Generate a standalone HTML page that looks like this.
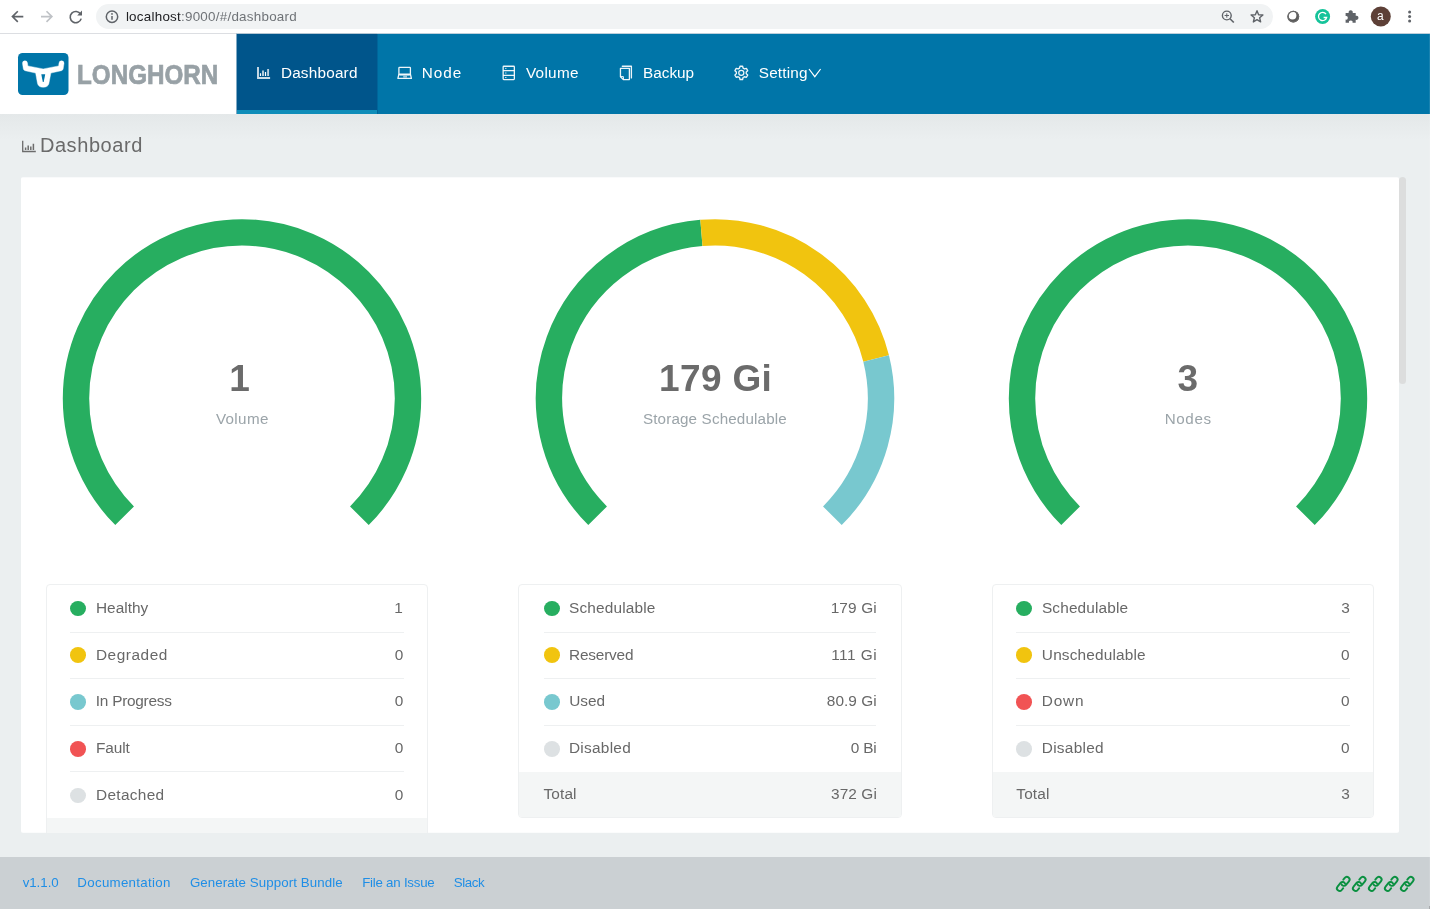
<!DOCTYPE html>
<html lang="en">
<head>
<meta charset="utf-8">
<title>Longhorn</title>
<style>
*{box-sizing:border-box;margin:0;padding:0}
html,body{width:1430px;height:909px;overflow:hidden;background:#ebeff0}
body{position:relative;will-change:transform;font-family:"Liberation Sans",sans-serif;color:#666}
.t b{font-weight:400;color:#202124}
.t{position:absolute;display:block;white-space:nowrap;font-style:normal;font-weight:400;text-decoration:none}
svg{position:absolute;display:block;overflow:visible}
#chrome{position:absolute;left:0;top:0;width:1430px;height:34px;background:#fff}
#chrome:after{content:"";position:absolute;left:0;top:33px;width:1430px;height:1px;background:linear-gradient(90deg,#dcdee2 236.5px,#b4c6d3 236.5px,#b4c6d3 377px,#bccfdb 377px)}
#omni{position:absolute;left:95.8px;top:3.7px;width:1177.2px;height:25.8px;border-radius:13px;background:#f1f3f4}
#header{position:absolute;left:0;top:33.7px;width:1430px;height:80.3px;background:#0075a8}
#logo{position:absolute;left:0;top:0;width:236.5px;height:80.3px;background:#fff}
#tab{position:absolute;left:237px;top:0;width:140px;height:80.3px;background:#00558b;box-shadow:-1px 0 0 #80aac5,1px 0 0 #00659a}
#tab:after{content:"";position:absolute;left:0;bottom:0;width:100%;height:4px;background:#0f8db9}
#shade{position:absolute;left:0;top:114px;width:1430px;height:26px;background:linear-gradient(#e4e8e9,#ebeff0)}
#card{position:absolute;left:21px;top:177px;width:1378px;height:656px;background:linear-gradient(#f9fafb 1px,#fff 1px,#fff 655px,#fbfcfc 655px);border-radius:2px}
#clip{position:absolute;left:0;top:0;width:1399px;height:832.8px;overflow:hidden}
#sb{position:absolute;left:1399px;top:177.3px;width:7px;height:207px;border-radius:3.5px;background:#dcdddd}
.tb{position:absolute;border:1px solid #eef0f1;border-radius:4px;background:#fff;overflow:hidden}
.tot{position:absolute;left:0;width:100%;background:#f4f6f6}
.sep{position:absolute;height:1px;background:#eef0f1}
.dot{position:absolute;width:16.4px;height:15.8px;border-radius:50%}
#footer{position:absolute;left:0;top:857px;width:1430px;height:52px;background:#cbd0d3}
#edge{position:absolute;left:1429px;top:34px;width:1px;height:875px;background:rgba(255,255,255,.1)}
#edge:after{content:"";position:absolute;left:0;bottom:0;width:1px;height:3px;background:#a9abad}
</style>
</head>
<body>
<div id="shade"></div>
<div id="chrome">
<div id="omni"></div>
<svg style="left:0;top:0" width="1430" height="34" viewBox="0 0 1430 34" fill="none">
<path d="M23.300 16.600H12.700M17.800 11.300L12.400 16.600L17.800 21.900" stroke="#5f6368" stroke-width="1.600"/>
<path d="M41 16.600H51.700M46.500 11.300L51.900 16.600L46.500 21.900" stroke="#bfc2c6" stroke-width="1.600"/>
<path d="M80.600 14.200A5.600 5.600 0 1 0 81.200 18.600" stroke="#5f6368" stroke-width="1.600"/>
<path d="M82 10.600V15.400H77.200Z" fill="#5f6368"/>
<circle cx="112" cy="16.700" r="5.700" stroke="#5f6368" stroke-width="1.500"/>
<path d="M112 16V19.800" stroke="#5f6368" stroke-width="1.500"/>
<circle cx="112" cy="13.900" r=".9" fill="#5f6368"/>
<circle cx="1226.800" cy="15.500" r="4.400" stroke="#5f6368" stroke-width="1.400"/>
<path d="M1230 18.700L1233.800 22.500" stroke="#5f6368" stroke-width="1.600"/>
<path d="M1224.600 15.500H1229M1226.800 13.300V17.700" stroke="#5f6368" stroke-width="1"/>
<path d="M1257.00 10.70L1258.62 14.68L1262.90 14.98L1259.62 17.75L1260.64 21.92L1257.00 19.65L1253.36 21.92L1254.38 17.75L1251.10 14.98L1255.38 14.68Z" stroke="#5f6368" stroke-width="1.400" stroke-linejoin="round"/>
<circle cx="1293.300" cy="16.600" r="5.900" fill="#5a5a5a"/>
<circle cx="1292.500" cy="15.500" r="3.900" fill="#fff"/>
<circle cx="1293.300" cy="16.600" r="5.300" fill="none" stroke="#6a6a6a" stroke-width="1.300"/>
<circle cx="1322.600" cy="16.500" r="7.500" fill="#15c39a"/>
<path d="M1326 14.200A4.100 4.100 0 1 0 1326.600 17.500H1323.600" stroke="#fff" stroke-width="1.300"/>
<path d="M1345.600 12.900H1348.700A2.100 2.100 0 1 1 1352.700 12.900H1355.700V15.800A2.100 2.100 0 1 1 1355.700 19.800V22.800H1352.500A1.800 1.800 0 1 0 1349 22.800H1345.600V19.600A1.800 1.800 0 1 0 1345.600 16.100Z" fill="#5f6368"/>
<circle cx="1380.800" cy="16.500" r="10" fill="#5d4037"/>
<circle cx="1409.600" cy="12.100" r="1.500" fill="#5f6368"/>
<circle cx="1409.600" cy="16.600" r="1.500" fill="#5f6368"/>
<circle cx="1409.600" cy="21.100" r="1.500" fill="#5f6368"/>
</svg>
<span class="t" style="left:125.9px;top:8px;font-size:13.4px;line-height:18px;color:#6f7377;letter-spacing:0.25px"><b>localhost</b>:9000/#/dashboard</span>
<span class="t" style="left:1377.1px;top:8px;font-size:12px;line-height:16px;color:#ffffff">a</span>
</div>
<header id="header">
<div id="logo"></div>
<div id="tab"></div>
</header>
<svg style="left:17.800px;top:52.900px" width="50.500" height="42" viewBox="0 0 50.500 42">
<rect x="0" y="0" width="50.500" height="42" rx="4.600" fill="#0075a8"/>
<path d="M4.500 10.600A2.500 2.500 0 0 1 9.500 10.100L9.900 12.900L25.200 15.900L40.600 12.900L41 10.100A2.500 2.500 0 0 1 46 10.600L45.200 15.800Q44.900 17.300 43.400 17.700L32.900 20.100L30.900 30.600Q30.100 34.300 25.200 34.300Q20.300 34.300 19.500 30.600L17.600 20.100L7.100 17.700Q5.600 17.300 5.300 15.800Z" fill="#fff" stroke="#fff" stroke-width=".4" stroke-linejoin="round"/>
<path d="M23.300 21.300H27.200L25.700 29H24.800Z" fill="#0075a8"/>
</svg>
<div class="t" style="left:77.29px;top:57px;font-size:27.6px;line-height:36px;color:#98a1a6;font-weight:700;transform-origin:0 50%;transform:scaleX(.878);-webkit-text-stroke:.7px #98a1a6">LONGHORN</div>
<svg style="left:0;top:0" width="1430" height="114" viewBox="0 0 1430 114" fill="none" stroke="#fff" stroke-width="1.3" stroke-opacity=".93">
<g id="ic-dash"><path d="M258 67V78H270.100" stroke-width="1.900" stroke-opacity=".8"/><path d="M260.500 73.200V76.100M265.500 72.100V76.100" stroke-width="1.200" stroke-opacity="1"/><path d="M263 70.600V76.100M268.100 68.900V76.100" stroke-width="1.900" stroke-opacity=".72"/></g>
<g id="ic-node"><rect x="398.900" y="67.350" width="11.500" height="6.900" rx=".6"/><path d="M398.900 74.200L397.900 78.400H411.400L410.400 74.200" stroke-linejoin="round"/><path d="M399.400 75.200H409.900" stroke-width="1.400" stroke-opacity=".6"/><path d="M403.200 76.700H407" stroke-width="1.800" stroke-opacity=".6"/></g>
<g id="ic-vol"><rect x="503.150" y="66.250" width="11.200" height="13.300" rx=".7"/><path d="M503.100 70.650H514.400M503.100 75.350H514.400" stroke-width="1.200"/><path d="M505.200 68.400H506.400M505.200 73H506.400M505.200 77.500H506.400" stroke-width="1"/></g>
<g id="ic-bak"><path d="M622.300 66.250H631.400V77.900" stroke-linecap="round" stroke-linejoin="round"/><path d="M620.450 68.350H629.400V79.550H623.300L620.450 76.700Z" stroke-linejoin="round"/><path d="M620.700 76.600H623.400V79.300" stroke-width="1"/></g>
<g id="ic-set" stroke-linejoin="round"><circle cx="741.3" cy="72.85" r="2.550" stroke-width="1.250"/><path d="M739.51 68.18L740.01 66.22L742.59 66.22L743.09 68.18L744.45 68.96L746.39 68.42L747.68 70.65L746.24 72.07L746.24 73.63L747.68 75.05L746.39 77.28L744.45 76.74L743.09 77.52L742.59 79.48L740.01 79.48L739.51 77.52L738.15 76.74L736.21 77.28L734.92 75.05L736.36 73.63L736.36 72.07L734.92 70.65L736.21 68.42L738.15 68.96Z" stroke-width="1.350"/></g>
<path d="M809 69L814.800 76.700L820.600 69" stroke-width="1.200" stroke-opacity="1"/>
</svg>
<nav>
<a class="t" style="left:280.9px;top:63px;font-size:15.3px;line-height:20px;color:#ffffff;letter-spacing:0.21px">Dashboard</a>
<a class="t" style="left:421.83px;top:63px;font-size:15.3px;line-height:20px;color:#ffffff;letter-spacing:0.93px">Node</a>
<a class="t" style="left:525.99px;top:63px;font-size:15.3px;line-height:20px;color:#ffffff;letter-spacing:0.28px">Volume</a>
<a class="t" style="left:642.97px;top:63px;font-size:15.3px;line-height:20px;color:#ffffff;letter-spacing:0.02px">Backup</a>
<a class="t" style="left:758.79px;top:63px;font-size:15.3px;line-height:20px;color:#ffffff;letter-spacing:0.17px">Setting</a>
</nav>
<svg style="left:22px;top:140px" width="14" height="13" viewBox="0 0 14 13" fill="none" stroke="#6c6c6c" stroke-width="1.300"><path d="M.7 .8V11.500H13.800"/><path d="M3.600 7.600V10M6.200 5.400V10M8.800 6.600V10M11.400 3.800V10" stroke-width="1.500"/></svg>
<h1 class="t" style="left:39.91px;top:131.7px;font-size:20px;line-height:26px;color:#6a6a6a;letter-spacing:0.57px">Dashboard</h1>
<main id="card"></main>
<div id="clip">
<svg style="left:0;top:0" width="1430" height="909" viewBox="0 0 1430 909" fill="none" stroke-width="26.4">
<path stroke="#27ae60" d="M124.62 515.78A166 166 0 1 1 359.38 515.78"/>
<path stroke="#27ae60" d="M597.62 515.78A166 166 0 0 1 701.41 232.96"/>
<path stroke="#f1c40f" d="M701.41 232.96A166 166 0 0 1 876.14 358.54"/>
<path stroke="#78c8cf" d="M876.14 358.54A166 166 0 0 1 832.38 515.78"/>
<path stroke="#27ae60" d="M1070.62 515.78A166 166 0 1 1 1305.38 515.78"/>
</svg>
<div class="t" style="left:229.2px;top:354.3px;font-size:37px;line-height:49px;color:#6b6b6b;font-weight:700">1</div>
<div class="t" style="left:215.93px;top:408.6px;font-size:15.2px;line-height:20px;color:#9ba4a9;letter-spacing:0.35px">Volume</div>
<div class="t" style="left:659.08px;top:354.3px;font-size:37px;line-height:49px;color:#6b6b6b;font-weight:700;letter-spacing:0.34px">179 Gi</div>
<div class="t" style="left:642.92px;top:408.6px;font-size:15.2px;line-height:20px;color:#9ba4a9;letter-spacing:0.16px">Storage Schedulable</div>
<div class="t" style="left:1177.6px;top:354.3px;font-size:37px;line-height:49px;color:#6b6b6b;font-weight:700">3</div>
<div class="t" style="left:1164.82px;top:408.6px;font-size:15.2px;line-height:20px;color:#9ba4a9;letter-spacing:0.57px">Nodes</div>
<section class="tb" style="left:45.8px;top:584.3px;width:382.4px;height:279.7px">
<div class="tot" style="top:232.5px;height:46.2px"></div></section>
<div class="sep" style="left:70px;top:631.5px;width:333.7px"></div>
<div class="sep" style="left:70px;top:677.8px;width:333.7px"></div>
<div class="sep" style="left:70px;top:725.1px;width:333.7px"></div>
<div class="sep" style="left:70px;top:771.4px;width:333.7px"></div>
<i class="dot" style="left:70px;top:600.6px;background:#27ae60"></i>
<i class="dot" style="left:70px;top:647.4px;background:#f1c40f"></i>
<i class="dot" style="left:70px;top:694px;background:#78c8cf"></i>
<i class="dot" style="left:70px;top:740.9px;background:#f15354"></i>
<i class="dot" style="left:70px;top:787.5px;background:#dde1e3"></i>
<span class="t" style="left:95.98px;top:596.8px;font-size:15.4px;line-height:21px;color:#686868;letter-spacing:0.02px">Healthy</span>
<em class="t" style="left:394.26px;top:596.8px;font-size:15.4px;line-height:21px;color:#686868">1</em>
<span class="t" style="left:95.98px;top:643.7px;font-size:15.4px;line-height:21px;color:#686868;letter-spacing:0.54px">Degraded</span>
<em class="t" style="left:394.84px;top:643.7px;font-size:15.4px;line-height:21px;color:#686868">0</em>
<span class="t" style="left:95.8px;top:690.2px;font-size:15.4px;line-height:21px;color:#686868;letter-spacing:-0.26px">In Progress</span>
<em class="t" style="left:394.84px;top:690.2px;font-size:15.4px;line-height:21px;color:#686868">0</em>
<span class="t" style="left:95.98px;top:737.3px;font-size:15.4px;line-height:21px;color:#686868;letter-spacing:-0.12px">Fault</span>
<em class="t" style="left:394.84px;top:737.3px;font-size:15.4px;line-height:21px;color:#686868">0</em>
<span class="t" style="left:95.98px;top:783.8px;font-size:15.4px;line-height:21px;color:#686868;letter-spacing:0.32px">Detached</span>
<em class="t" style="left:394.84px;top:783.8px;font-size:15.4px;line-height:21px;color:#686868">0</em>
<span class="t" style="left:70.8px;top:830px;font-size:15.4px;line-height:21px;color:#686868;letter-spacing:-0.07px">Total</span>
<em class="t" style="left:394.8px;top:830px;font-size:15.4px;line-height:21px;color:#686868">1</em>
<section class="tb" style="left:518.3px;top:584.3px;width:383.7px;height:233.7px">
<div class="tot" style="top:186.6px;height:46.1px"></div></section>
<div class="sep" style="left:543.6px;top:631.5px;width:332.4px"></div>
<div class="sep" style="left:543.6px;top:677.8px;width:332.4px"></div>
<div class="sep" style="left:543.6px;top:725.1px;width:332.4px"></div>
<i class="dot" style="left:543.6px;top:600.6px;background:#27ae60"></i>
<i class="dot" style="left:543.6px;top:647.4px;background:#f1c40f"></i>
<i class="dot" style="left:543.6px;top:694px;background:#78c8cf"></i>
<i class="dot" style="left:543.6px;top:740.9px;background:#dde1e3"></i>
<span class="t" style="left:569.02px;top:596.8px;font-size:15.4px;line-height:21px;color:#686868;letter-spacing:0.16px">Schedulable</span>
<em class="t" style="left:830.65px;top:596.8px;font-size:15.4px;line-height:21px;color:#686868;letter-spacing:0.16px">179 Gi</em>
<span class="t" style="left:568.98px;top:643.7px;font-size:15.4px;line-height:21px;color:#686868;letter-spacing:-0.19px">Reserved</span>
<em class="t" style="left:831.14px;top:643.7px;font-size:15.4px;line-height:21px;color:#686868;letter-spacing:0.52px">111 Gi</em>
<span class="t" style="left:569.14px;top:690.2px;font-size:15.4px;line-height:21px;color:#686868;letter-spacing:0.03px">Used</span>
<em class="t" style="left:826.84px;top:690.2px;font-size:15.4px;line-height:21px;color:#686868;letter-spacing:0.05px">80.9 Gi</em>
<span class="t" style="left:568.98px;top:737.3px;font-size:15.4px;line-height:21px;color:#686868;letter-spacing:0.27px">Disabled</span>
<em class="t" style="left:850.64px;top:737.3px;font-size:15.4px;line-height:21px;color:#686868;letter-spacing:-0.12px">0 Bi</em>
<span class="t" style="left:543.47px;top:782.9px;font-size:15.4px;line-height:21px;color:#686868;letter-spacing:0.14px">Total</span>
<em class="t" style="left:831px;top:782.9px;font-size:15.4px;line-height:21px;color:#686868;letter-spacing:0.09px">372 Gi</em>
<section class="tb" style="left:991.8px;top:584.3px;width:382.2px;height:233.7px">
<div class="tot" style="top:186.6px;height:46.1px"></div></section>
<div class="sep" style="left:1016px;top:631.5px;width:333.6px"></div>
<div class="sep" style="left:1016px;top:677.8px;width:333.6px"></div>
<div class="sep" style="left:1016px;top:725.1px;width:333.6px"></div>
<i class="dot" style="left:1016px;top:600.6px;background:#27ae60"></i>
<i class="dot" style="left:1016px;top:647.4px;background:#f1c40f"></i>
<i class="dot" style="left:1016px;top:694px;background:#f15354"></i>
<i class="dot" style="left:1016px;top:740.9px;background:#dde1e3"></i>
<span class="t" style="left:1041.91px;top:596.8px;font-size:15.4px;line-height:21px;color:#686868;letter-spacing:0.15px">Schedulable</span>
<em class="t" style="left:1341.14px;top:596.8px;font-size:15.4px;line-height:21px;color:#686868">3</em>
<span class="t" style="left:1041.86px;top:643.7px;font-size:15.4px;line-height:21px;color:#686868;letter-spacing:0.16px">Unschedulable</span>
<em class="t" style="left:1341.02px;top:643.7px;font-size:15.4px;line-height:21px;color:#686868">0</em>
<span class="t" style="left:1041.78px;top:690.2px;font-size:15.4px;line-height:21px;color:#686868;letter-spacing:0.8px">Down</span>
<em class="t" style="left:1341.02px;top:690.2px;font-size:15.4px;line-height:21px;color:#686868">0</em>
<span class="t" style="left:1041.78px;top:737.3px;font-size:15.4px;line-height:21px;color:#686868;letter-spacing:0.28px">Disabled</span>
<em class="t" style="left:1341.02px;top:737.3px;font-size:15.4px;line-height:21px;color:#686868">0</em>
<span class="t" style="left:1016.33px;top:782.9px;font-size:15.4px;line-height:21px;color:#686868;letter-spacing:0.14px">Total</span>
<em class="t" style="left:1341.15px;top:782.9px;font-size:15.4px;line-height:21px;color:#686868">3</em>
</div>
<div id="sb"></div>
<footer id="footer"></footer>
<div id="edge"></div>
<a class="t" style="left:22.63px;top:874.4px;font-size:13.3px;line-height:18px;color:#1f8ee6;letter-spacing:-0.03px">v1.1.0</a>
<a class="t" style="left:77.36px;top:874.4px;font-size:13.3px;line-height:18px;color:#1f8ee6;letter-spacing:0.29px">Documentation</a>
<a class="t" style="left:189.9px;top:874.4px;font-size:13.3px;line-height:18px;color:#1f8ee6;letter-spacing:0.09px">Generate Support Bundle</a>
<a class="t" style="left:362.21px;top:874.4px;font-size:13.3px;line-height:18px;color:#1f8ee6;letter-spacing:-0.24px">File an Issue</a>
<a class="t" style="left:453.66px;top:874.4px;font-size:13.3px;line-height:18px;color:#1f8ee6;letter-spacing:-0.37px">Slack</a>
<svg style="left:1335.700px;top:876.100px" width="82" height="20" viewBox="0 0 82 20" fill="none" stroke="#0a9040" stroke-width="1.900" stroke-linecap="round" stroke-linejoin="round"><g transform="translate(0 0)"><path d="M7.30 3.70L8.77 1.92A2.7 2.7 0 0 1 12.93 5.38L9.98 8.93A2.7 2.7 0 0 1 5.37 8.14"/><path d="M7.20 12.20L5.73 13.98A2.7 2.7 0 0 1 1.57 10.52L4.52 6.97A2.7 2.7 0 0 1 9.13 7.76"/></g><g transform="translate(16 0)"><path d="M7.30 3.70L8.77 1.92A2.7 2.7 0 0 1 12.93 5.38L9.98 8.93A2.7 2.7 0 0 1 5.37 8.14"/><path d="M7.20 12.20L5.73 13.98A2.7 2.7 0 0 1 1.57 10.52L4.52 6.97A2.7 2.7 0 0 1 9.13 7.76"/></g><g transform="translate(32 0)"><path d="M7.30 3.70L8.77 1.92A2.7 2.7 0 0 1 12.93 5.38L9.98 8.93A2.7 2.7 0 0 1 5.37 8.14"/><path d="M7.20 12.20L5.73 13.98A2.7 2.7 0 0 1 1.57 10.52L4.52 6.97A2.7 2.7 0 0 1 9.13 7.76"/></g><g transform="translate(48 0)"><path d="M7.30 3.70L8.77 1.92A2.7 2.7 0 0 1 12.93 5.38L9.98 8.93A2.7 2.7 0 0 1 5.37 8.14"/><path d="M7.20 12.20L5.73 13.98A2.7 2.7 0 0 1 1.57 10.52L4.52 6.97A2.7 2.7 0 0 1 9.13 7.76"/></g><g transform="translate(64 0)"><path d="M7.30 3.70L8.77 1.92A2.7 2.7 0 0 1 12.93 5.38L9.98 8.93A2.7 2.7 0 0 1 5.37 8.14"/><path d="M7.20 12.20L5.73 13.98A2.7 2.7 0 0 1 1.57 10.52L4.52 6.97A2.7 2.7 0 0 1 9.13 7.76"/></g></svg>
</body>
</html>
